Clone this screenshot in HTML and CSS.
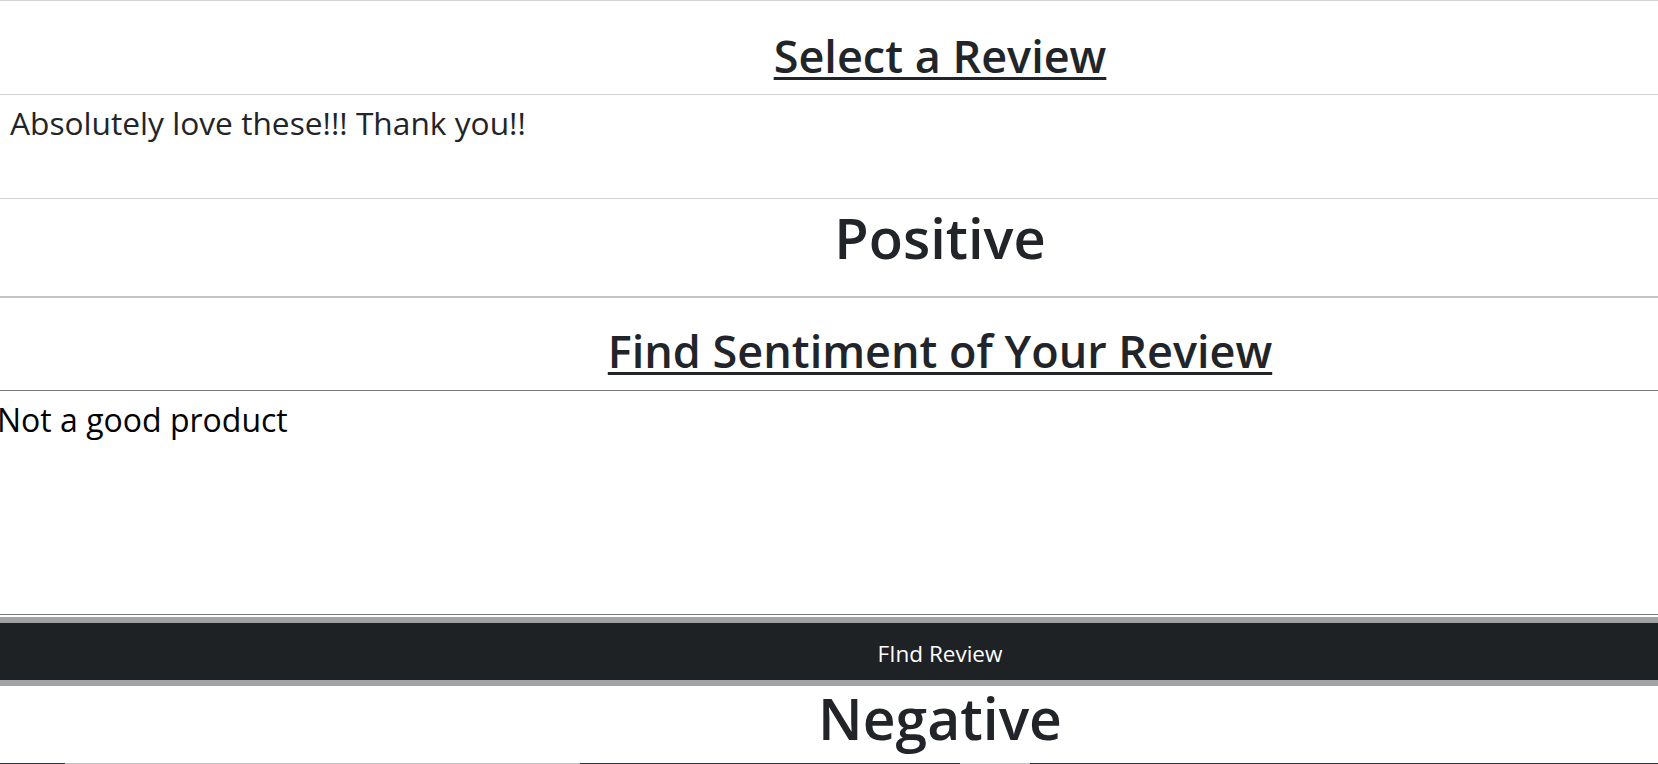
FILE: index.html
```html
<!DOCTYPE html>
<html lang="en">
<head>
<meta charset="utf-8">
<title>Review Sentiment</title>
<link rel="stylesheet" href="styles.css">
</head>
<body>
<main class="page">
  <section class="row row-title">
    <h1 class="title"><u class="ul">Select a Review</u></h1>
  </section>
  <section class="row row-review">
    <p class="review">Absolutely love these!!! Thank you!!</p>
  </section>
  <section class="row row-result">
    <h2 class="result">Positive</h2>
  </section>
  <hr class="divider">
  <section class="finder">
    <h1 class="title title-find"><u class="ul">Find Sentiment of Your Review</u></h1>
    <textarea class="input" readonly>Not a good product</textarea>
    <button class="btn" type="button">FInd Review</button>
    <h2 class="result result-neg">Negative</h2>
    <div class="strip">
      <span class="seg seg-dark w65"></span>
      <span class="seg seg-light w515"></span>
      <span class="seg seg-dark w380"></span>
      <span class="seg seg-light w70"></span>
      <span class="seg seg-dark grow"></span>
    </div>
  </section>
</main>
</body>
</html>
```

FILE: styles.css
```css
html, body {
  margin: 0;
  padding: 0;
  background: #ffffff;
  overflow: hidden;
}

body {
  font-family: "Open Sans", "Noto Sans", sans-serif;
  color: #212529;
}

.page {
  width: 1880px;
  display: flex;
  flex-direction: column;
  border-top: 1px solid #d2d2d2;
}

.row {
  border-bottom: 1px solid #d2d2d2;
  box-sizing: border-box;
}

.row-title {
  height: 94px;
  padding-top: 32px;
}

.row-review {
  height: 104px;
  padding: 12px 10px 0;
}

.row-result {
  height: 97px;
  border-bottom: none;
  padding-top: 10px;
}

.title {
  margin: 0;
  font-size: 45px;
  line-height: 45px;
  font-weight: 600;
  text-align: center;
}

.ul {
  text-decoration: underline;
  text-decoration-thickness: 3px;
  text-underline-offset: 4px;
}

.review {
  margin: 0;
  font-size: 31.7px;
  line-height: 32px;
  font-weight: 400;
}

.result {
  margin: 0;
  font-size: 56px;
  line-height: 56px;
  font-weight: 600;
  text-align: center;
}

.divider {
  margin: 0;
  border: none;
  height: 2px;
  background: #c4c4c4;
}

.finder {
  display: flex;
  flex-direction: column;
}

.title-find {
  padding-top: 30px;
  margin-bottom: 17px;
}

.input {
  display: block;
  box-sizing: border-box;
  height: 225px;
  width: calc(100% + 4px);
  margin: 0 0 0 -4px;
  padding: 13px 0 0 0;
  border: 1px solid #767676;
  border-radius: 0;
  font-family: "Open Sans", "Noto Sans", sans-serif;
  font-size: 32px;
  line-height: 32px;
  color: #000000;
  background: #ffffff;
  resize: none;
  outline: none;
  overflow: hidden;
}

.btn {
  display: block;
  box-sizing: border-box;
  width: 100%;
  height: 57px;
  margin: 8px 0 0;
  padding: 5px 0 0;
  border: none;
  border-radius: 0;
  background: #1f2225;
  color: #ffffff;
  font-family: "Open Sans", "Noto Sans", sans-serif;
  font-size: 22.5px;
  line-height: 22.5px;
  font-weight: 400;
  text-align: center;
  box-shadow: 0 0 0 6px #a1a3a4;
}

.result-neg {
  font-size: 57px;
  line-height: 57px;
  margin-top: 10px;
  padding-bottom: 16px;
}

.strip {
  display: flex;
  height: 1px;
}

.seg { display: block; height: 1px; }
.seg-dark { background: #2e3338; }
.seg-light { background: #c2c2c2; }
.w65 { width: 65px; }
.w515 { width: 515px; }
.w380 { width: 380px; }
.w70 { width: 70px; }
.grow { flex: 1; }
```
